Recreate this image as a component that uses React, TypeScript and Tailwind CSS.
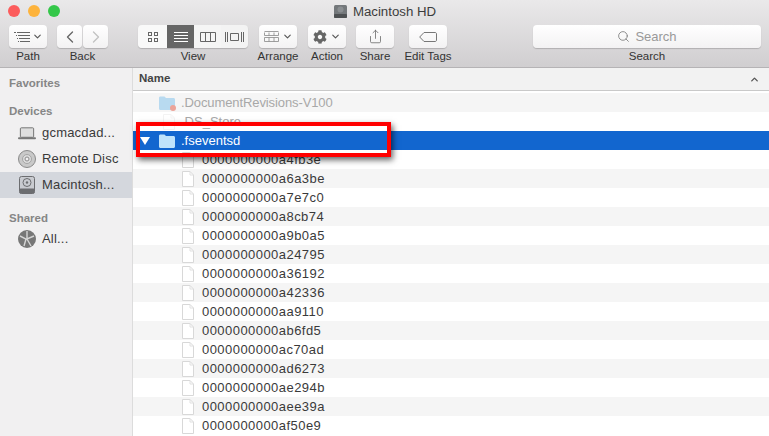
import { ChevronDown, ChevronLeft, ChevronRight, ChevronUp, Search, Share } from "lucide-react";
import { FaCog } from "react-icons/fa";

const files = [
  "0000000000a4fb3e",
  "0000000000a6a3be",
  "0000000000a7e7c0",
  "0000000000a8cb74",
  "0000000000a9b0a5",
  "0000000000a24795",
  "0000000000a36192",
  "0000000000a42336",
  "0000000000aa9110",
  "0000000000ab6fd5",
  "0000000000ac70ad",
  "0000000000ad6273",
  "0000000000ae294b",
  "0000000000aee39a",
  "0000000000af50e9",
];

const btn = "flex h-[23px] items-center justify-center rounded-[4px] bg-gradient-to-b from-white to-[#f3f2f3] shadow-[0_1px_1px_rgba(0,0,0,0.18)]";

function ToolItem({ label, className, children }: { label: string; className: string; children: React.ReactNode }) {
  return (
    <div className={`flex flex-col items-center ${className}`}>
      {children}
      <span className="mt-[1px] whitespace-nowrap text-[11.5px] leading-[14px] text-[#333]">{label}</span>
    </div>
  );
}

function FileIcon({ dim }: { dim?: boolean }) {
  return (
    <svg width="12" height="16" viewBox="0 0 12 16" className={dim ? "opacity-30" : ""}>
      <path d="M0.5 0.5H8L11.5 4V15.5H0.5Z" fill="#fff" stroke="#d8d8d8" />
      <path d="M8 0.5V4H11.5" fill="none" stroke="#e0e0e0" />
    </svg>
  );
}

function FolderIcon({ color }: { color: string }) {
  return (
    <svg width="16" height="14" viewBox="0 0 16 14">
      <path d="M0 2C0 1 .6.5 1.5.5H5.5L7 2H14.5C15.4 2 16 2.6 16 3.5V12.5C16 13.4 15.4 14 14.5 14H1.5C.6 14 0 13.4 0 12.5Z" fill={color} />
    </svg>
  );
}

function SideRow({ label, active, children }: { label: string; active?: boolean; children: React.ReactNode }) {
  return (
    <div className={`flex h-[26px] items-center pl-[18px] ${active ? "bg-[#d4d7dd]" : ""}`}>
      <span className="flex w-[18px] justify-center">{children}</span>
      <span className="ml-[6px] text-[13px] tracking-[0.2px] text-[#3a3a3a]">{label}</span>
    </div>
  );
}

export default function App() {
  return (
    <div className="relative flex h-[436px] w-[769px] flex-col overflow-hidden bg-white font-['Liberation_Sans',sans-serif]">
      {/* title bar + toolbar */}
      <div className="h-[68px] shrink-0 border-b border-[#b5b3b5] bg-gradient-to-b from-[#eae9ea] to-[#d0ced0]">
        <div className="relative flex h-[22px] items-center justify-center pt-[1px]">
          <div className="absolute left-[8px] top-[5px] flex gap-[8px]">
            <span className="h-[12px] w-[12px] rounded-full bg-[#fc5c5c]" />
            <span className="h-[12px] w-[12px] rounded-full bg-[#fdb33c]" />
            <span className="h-[12px] w-[12px] rounded-full bg-[#34c749]" />
          </div>
          <svg width="15" height="15" viewBox="0 0 15 15" className="mr-[5px]">
            <rect x="1" y="1" width="13" height="13" rx="1.5" fill="#74787b" />
            <rect x="1" y="10" width="13" height="4" rx="1" fill="#4e5153" />
            <circle cx="7.5" cy="5.5" r="3" fill="#8b8f92" />
          </svg>
          <span className="text-[13.25px] text-[#3c3c3c]">Macintosh HD</span>
        </div>
        <div className="relative flex pl-[9px] pt-[3px]">
          <ToolItem label="Path" className="w-[38px]">
            <div className={`${btn} w-[38px] gap-[2px]`}>
              <svg width="16" height="10" viewBox="0 0 16 10" stroke="#666" fill="none">
                <path d="M0 .5h2M3 .5H16M2 3.5h1M4 3.5H16M3 6.5h1M5 6.5H16M4 9.5h1M6 9.5H16" />
              </svg>
              <ChevronDown size={11} strokeWidth={2.5} className="text-[#555]" />
            </div>
          </ToolItem>
          <ToolItem label="Back" className="ml-[10px] w-[51px]">
            <div className="flex gap-[1px]">
              <div className={`${btn} w-[25px]`}>
                <ChevronLeft size={20} strokeWidth={1.6} className="text-[#666]" />
              </div>
              <div className={`${btn} w-[25px]`}>
                <ChevronRight size={20} strokeWidth={1.6} className="text-[#c2c2c2]" />
              </div>
            </div>
          </ToolItem>
          <ToolItem label="View" className="ml-[30px] w-[110px]">
            <div className="flex overflow-hidden rounded-[4px] shadow-[0_1px_1px_rgba(0,0,0,0.18)]">
              <div className="flex h-[23px] w-[29px] items-center justify-center bg-[#f9f9f9]">
                <svg width="10" height="10" viewBox="0 0 10 10" fill="none" stroke="#666">
                  <rect x=".5" y=".5" width="3" height="3" />
                  <rect x="6.5" y=".5" width="3" height="3" />
                  <rect x=".5" y="6.5" width="3" height="3" />
                  <rect x="6.5" y="6.5" width="3" height="3" />
                </svg>
              </div>
              <div className="flex h-[23px] w-[27px] items-center justify-center bg-[#666]">
                <svg width="14" height="10" viewBox="0 0 14 10" stroke="#fff">
                  <path d="M0 .5H14M0 3.5H14M0 6.5H14M0 9.5H14" />
                </svg>
              </div>
              <div className="flex h-[23px] w-[27px] items-center justify-center bg-[#f5f5f5]">
                <svg width="16" height="10" viewBox="0 0 16 10" fill="none" stroke="#666">
                  <path d="M.5.5h15v9H.5zM5.5.5v9M10.5.5v9" />
                </svg>
              </div>
              <div className="flex h-[23px] w-[27px] items-center justify-center bg-[#f3f3f3]">
                <svg width="19" height="10" viewBox="0 0 19 10" fill="none" stroke="#666">
                  <path d="M.5 0v10M2.5 0v10M16.5 0v10M18.5 0v10M5.5 1.5h8v7h-8z" />
                </svg>
              </div>
            </div>
          </ToolItem>
          <ToolItem label="Arrange" className="ml-[11px] w-[38px]">
            <div className={`${btn} w-[38px] gap-[3px]`}>
              <svg width="15" height="11" viewBox="0 0 15 11" fill="none" stroke="#888" strokeWidth="0.8">
                <path d="M.5 .5h14M.5 4.5h14M.5 1.5v3M5 1.5v3M10 1.5v3M14.5 1.5v3M.5 6.5h14v4H.5zM5 6.5v4M10 6.5v4" />
              </svg>
              <ChevronDown size={11} strokeWidth={2.5} className="text-[#555]" />
            </div>
          </ToolItem>
          <ToolItem label="Action" className="ml-[11px] w-[38px]">
            <div className={`${btn} w-[38px] gap-[3px]`}>
              <FaCog size={14} className="text-[#666]" />
              <ChevronDown size={11} strokeWidth={2.5} className="text-[#555]" />
            </div>
          </ToolItem>
          <ToolItem label="Share" className="ml-[10px] w-[38px]">
            <div className={`${btn} w-[38px]`}>
              <Share size={15} strokeWidth={1.25} className="text-[#666]" />
            </div>
          </ToolItem>
          <ToolItem label="Edit Tags" className="ml-[15px] w-[38px]">
            <div className={`${btn} w-[38px]`}>
              <svg width="18" height="10" viewBox="0 0 18 10" fill="none" stroke="#777">
                <path d="M5 .5H16C17 .5 17.5 1 17.5 2V8C17.5 9 17 9.5 16 9.5H5L.7 5Z" />
              </svg>
            </div>
          </ToolItem>
          <ToolItem label="Search" className="ml-[86px] w-[228px]">
            <div className={`${btn} w-[228px] gap-[5px] text-[13px] text-[#999]`}>
              <Search size={13} strokeWidth={1.5} className="text-[#777]" />
              <span>Search</span>
            </div>
          </ToolItem>
        </div>
      </div>

      <div className="flex min-h-0 flex-1">
        {/* sidebar */}
        <aside className="w-[133px] shrink-0 border-r border-[#dcdcdc] bg-[#f1f0f1]">
          <div className="pl-[9px] pt-[8px] text-[11.5px] font-bold leading-[14px] text-[#868686]">Favorites</div>
          <div className="pl-[9px] pt-[14px] text-[11.5px] font-bold leading-[14px] text-[#868686]">Devices</div>
          <div className="mt-[2px]">
            <SideRow label="gcmacdad...">
              <svg width="19" height="13" viewBox="0 0 19 13">
                <rect x="2.5" y=".5" width="14" height="10" rx="1" fill="#dedede" stroke="#6f6f6f" />
                <rect x="0" y="10.5" width="19" height="2" rx="1" fill="#777" />
              </svg>
            </SideRow>
            <SideRow label="Remote Disc">
              <svg width="18" height="18" viewBox="0 0 18 18">
                <circle cx="9" cy="9" r="8.5" fill="#c9c9c9" stroke="#8a8a8a" />
                <circle cx="9" cy="9" r="4.5" fill="#dcdcdc" stroke="#a5a5a5" />
                <circle cx="9" cy="9" r="2" fill="#f1f0f1" stroke="#8a8a8a" />
              </svg>
            </SideRow>
            <SideRow label="Macintosh..." active>
              <svg width="16" height="18" viewBox="0 0 16 18">
                <rect x=".5" y=".5" width="15" height="17" rx="2" fill="#c9cbd0" stroke="#6c6d70" />
                <circle cx="8" cy="6.5" r="4" fill="none" stroke="#6c6d70" />
                <circle cx="8" cy="6.5" r="1.2" fill="#6c6d70" />
                <rect x=".5" y="12.5" width="15" height="5" rx="1" fill="#6c6d70" />
              </svg>
            </SideRow>
          </div>
          <div className="pl-[9px] pt-[13px] text-[11.5px] font-bold leading-[14px] text-[#868686]">Shared</div>
          <div className="mt-[1px]">
            <SideRow label="All...">
              <svg width="18" height="18" viewBox="0 0 18 18">
                <circle cx="9" cy="9" r="9" fill="#777" />
                <path d="M2 6L8 9L6 16M9 1V9L16 6M9 9L13 16" fill="none" stroke="#d5d5d5" strokeWidth="1.4" />
              </svg>
            </SideRow>
          </div>
        </aside>

        {/* file list */}
        <main className="min-w-0 flex-1">
          <div className="flex h-[23px] items-center justify-between border-b border-[#c9c9c9] bg-[#f2f2f2] pl-[6px] pr-[9px]">
            <span className="text-[11.5px] font-bold text-[#444]">Name</span>
            <ChevronUp size={11} strokeWidth={3} className="text-[#555]" />
          </div>
          <div className="h-[2px]" />
          <div className="flex h-[19px] items-center bg-[#f5f5f5] pl-[26px]">
            <div className="relative flex w-[20px] opacity-50">
              <FolderIcon color="#7cc0ec" />
              <span className="absolute bottom-[-1px] left-[11px] h-[6px] w-[6px] rounded-full bg-[#e5563f]" />
            </div>
            <span className="ml-[2px] text-[13px] tracking-[-0.1px] text-[#a8a8a8]">.DocumentRevisions-V100</span>
          </div>
          <div className="flex h-[19px] items-center bg-white pl-[26px]">
            <span className="flex w-[20px] justify-center"><FileIcon dim /></span>
            <span className="ml-[2px] text-[13px] text-[#a8a8a8]">.DS_Store</span>
          </div>
          <div className="flex h-[19px] items-center bg-[#1266cf] pl-[7px]">
            <span className="h-0 w-0 border-x-[5px] border-t-[8px] border-x-transparent border-t-white" />
            <span className="ml-[9px] flex w-[20px]"><FolderIcon color="#bfe3fb" /></span>
            <span className="ml-[2px] text-[13px] text-white">.fseventsd</span>
          </div>
          {files.map((name, i) => (
            <div key={name} className={`flex h-[19px] items-center pl-[49px] ${i % 2 === 0 ? "bg-white" : "bg-[#f5f5f5]"}`}>
              <FileIcon />
              <span className="ml-[8px] text-[13px] tracking-[0.45px] text-[#3a3a3a]">{name}</span>
            </div>
          ))}
        </main>
      </div>

      {/* red annotation box */}
      <div className="absolute left-[136px] top-[122px] h-[35px] w-[255px] border-4 border-[#f00] shadow-[2px_3px_6px_rgba(0,0,0,0.6)]" />
    </div>
  );
}
